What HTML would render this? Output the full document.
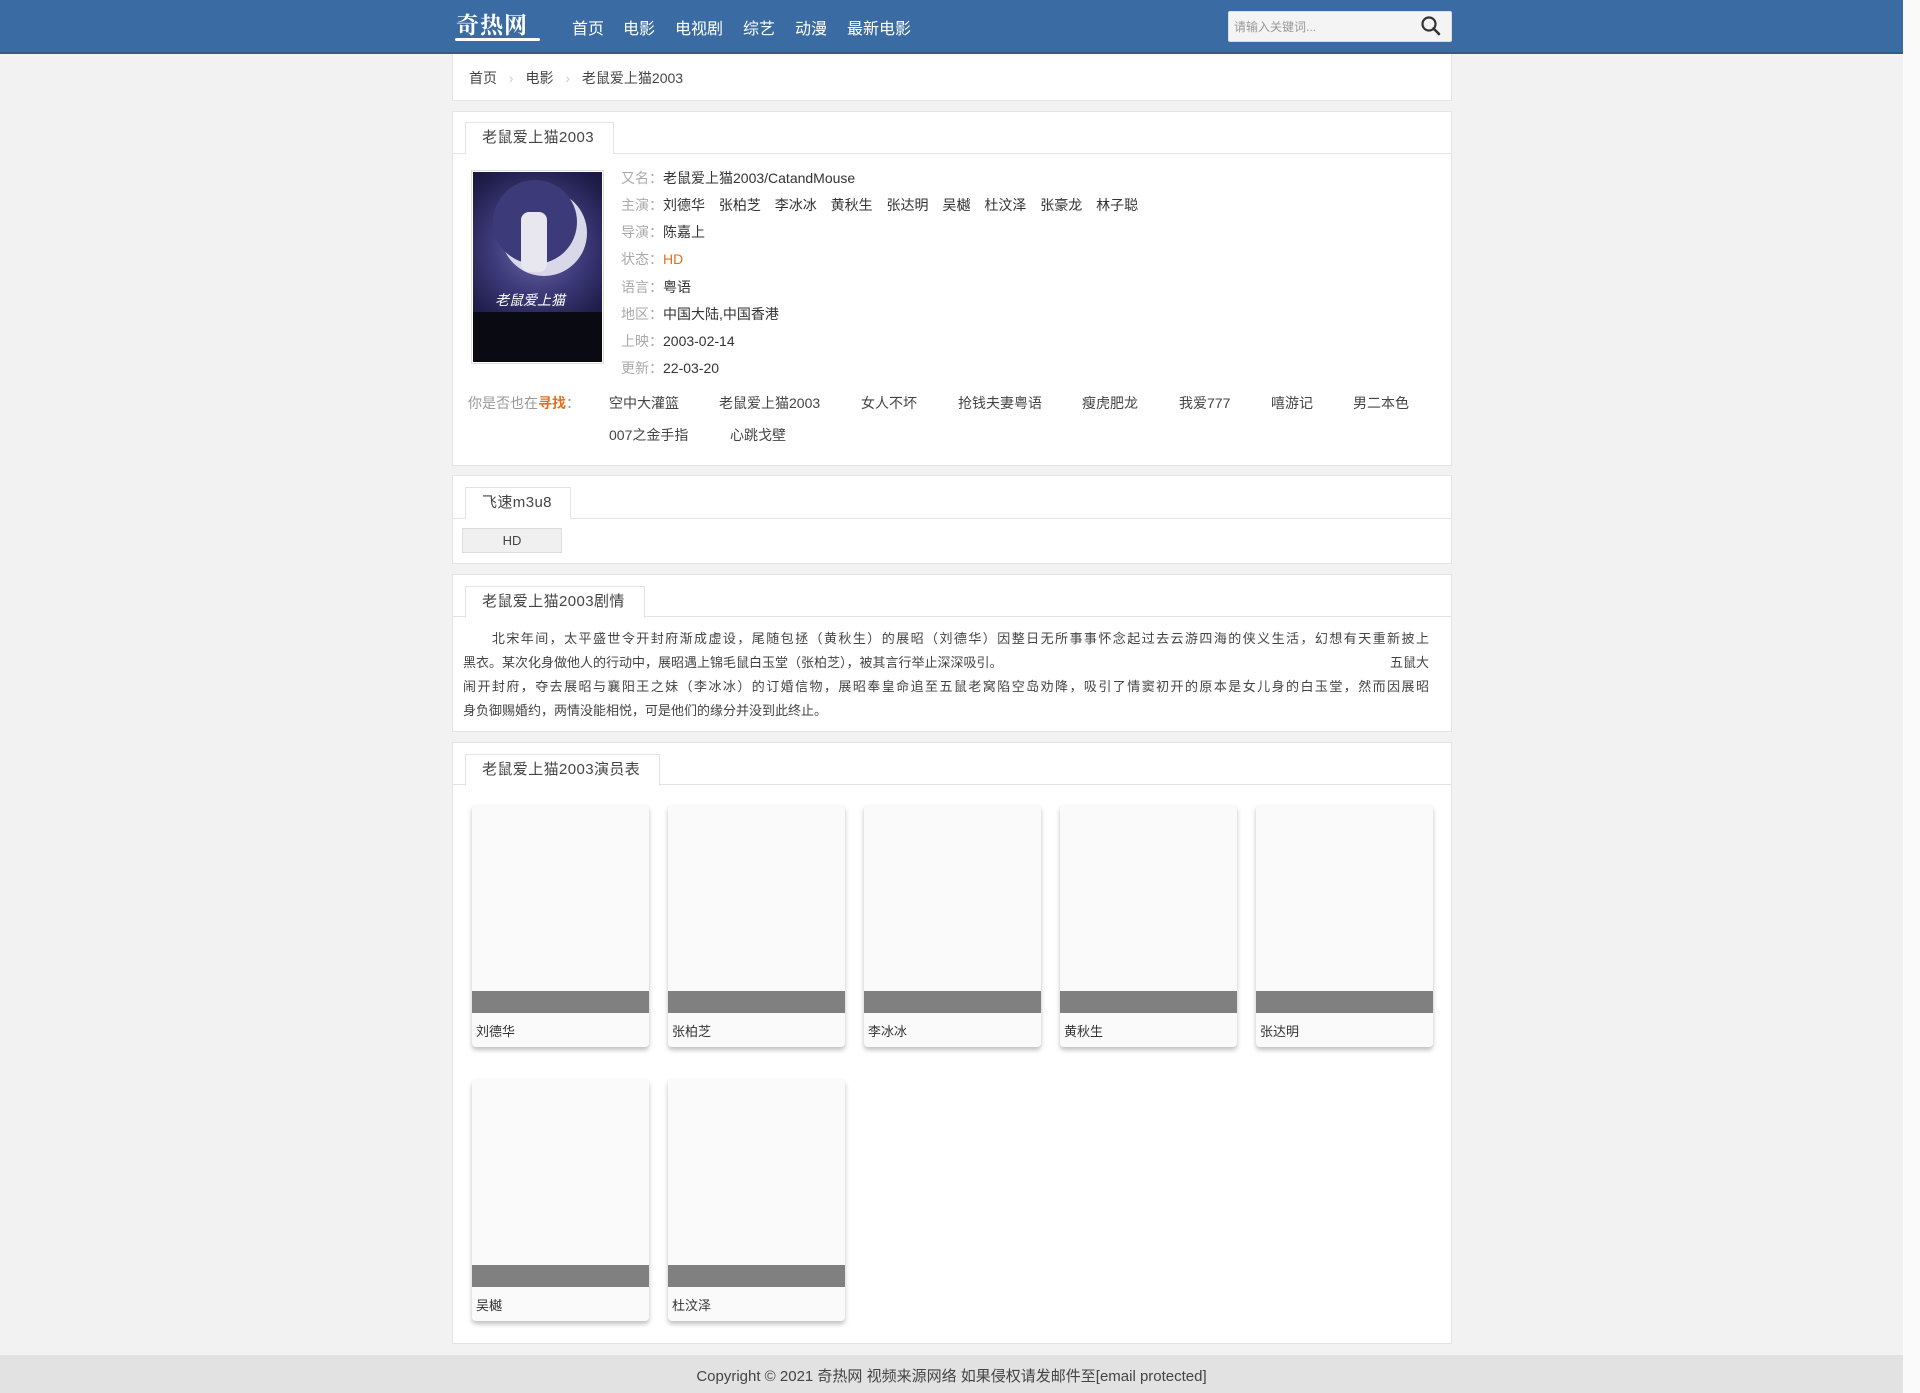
<!DOCTYPE html>
<html><head><meta charset="utf-8">
<style>
*{margin:0;padding:0;box-sizing:border-box}
body{width:1920px;height:1393px;background:#f2f2f2;font-family:"Liberation Sans","Noto Sans CJK SC",sans-serif;color:#333;position:relative;overflow:hidden}
.a{position:absolute}
.sb{position:absolute;left:1903px;top:0;width:17px;height:1393px;background:#fafafa}
.hd{left:0;top:0;width:1903px;height:54px;background:#3a6ca3;border-bottom:2px solid #2f5d90}
.nav a{position:absolute;top:15px;color:#fff;font-size:16px;text-decoration:none;white-space:nowrap}
.box{position:absolute;left:452px;width:1000px;background:#fff;border:1px solid #e3e3e3}
.tabline{position:absolute;left:0;right:0;height:1px;background:#e3e3e3}
.tab{position:absolute;left:12px;background:#fff;border:1px solid #e3e3e3;border-bottom:none;font-size:15px;color:#444;padding:0 17px 0 16px;line-height:30px;height:32px;letter-spacing:.4px}
.info{position:absolute;left:168px;font-size:14px;color:#333;white-space:nowrap}
.info span{color:#aaa}
.rel{position:absolute;font-size:14px;color:#444;white-space:nowrap}
.plot{position:absolute;left:10px;width:966px;font-size:13px;color:#444;text-align:justify;text-align-last:justify;white-space:nowrap}
.card{position:absolute;width:177px;height:242px;background:#fafafa;border-radius:4px;box-shadow:0 3px 5px rgba(0,0,0,.25)}
.card .bar{position:absolute;left:0;right:0;top:186px;height:22px;background:#808080}
.card .n{position:absolute;left:4px;top:216px;font-size:13px;color:#333}
</style></head><body>
<div class="sb"></div>
<div class="a hd"></div>
<div class="a" style="left:456px;top:7px;color:#fff;font-family:'Noto Serif CJK SC',serif;font-size:23px;font-weight:bold;letter-spacing:1px">奇热网</div>
<div class="a" style="left:455px;top:38px;width:85px;height:3px;background:#fff;border-radius:2px"></div>
<div class="nav">
<a style="left:572px">首页</a><a style="left:623px">电影</a><a style="left:675px">电视剧</a><a style="left:743px">综艺</a><a style="left:795px">动漫</a><a style="left:847px">最新电影</a>
</div>
<div class="a" style="left:1228px;top:11px;width:224px;height:31px;background:#f4f4f4;border:1px solid #ddd;border-radius:2px"></div>
<div class="a" style="left:1234px;top:18px;font-size:12px;color:#999">请输入关键词...</div>
<svg class="a" style="left:1420px;top:15px" width="22" height="22" viewBox="0 0 22 22"><circle cx="9" cy="9" r="6.5" fill="none" stroke="#333" stroke-width="2.2"/><line x1="13.5" y1="13.5" x2="19" y2="19" stroke="#333" stroke-width="2.6" stroke-linecap="round"/></svg>

<div class="box" style="top:54px;height:47px;border-top:none">
<div class="a" style="left:16px;top:14px;font-size:14px;color:#444;white-space:nowrap">首页 <span style="color:#ccc;margin:0 8px">›</span> 电影 <span style="color:#ccc;margin:0 8px">›</span> 老鼠爱上猫2003</div>
</div>

<div class="box" style="top:111px;height:355px">
<div class="tabline" style="top:41px"></div>
<div class="tab" style="top:10px;padding-right:19px">老鼠爱上猫2003</div>
<div class="a" style="left:18px;top:58px;width:133px;height:194px;border:1px solid #ddd;padding:1px;background:#fff">
<div style="width:100%;height:100%;background:radial-gradient(circle at 50% 40%,#6b6aa8 0,#3d3a7a 35%,#1f1d4a 65%,#0c0b1c 100%);position:relative;overflow:hidden">
<div style="position:absolute;left:28px;top:18px;width:86px;height:86px;border-radius:50%;background:#d8d8e8"></div>
<div style="position:absolute;left:20px;top:8px;width:84px;height:84px;border-radius:50%;background:#3d3a7a"></div>
<div style="position:absolute;left:48px;top:40px;width:26px;height:60px;background:#e8e6ee;border-radius:8px"></div>
<div style="position:absolute;left:22px;top:118px;color:#fff;font-size:14px;font-style:italic">老鼠爱上猫</div>
<div style="position:absolute;left:0;bottom:0;width:100%;height:50px;background:#0a0a12"></div>
</div></div>
<div class="info" style="top:56px"><span>又名：</span>老鼠爱上猫2003/CatandMouse</div>
<div class="info" style="top:83px;word-spacing:10px"><span style="word-spacing:0">主演：</span>刘德华 张柏芝 李冰冰 黄秋生 张达明 吴樾 杜汶泽 张豪龙 林子聪</div>
<div class="info" style="top:110px"><span>导演：</span>陈嘉上</div>
<div class="info" style="top:137px"><span>状态：</span><b style="font-weight:normal;color:#e07020">HD</b></div>
<div class="info" style="top:165px"><span>语言：</span>粤语</div>
<div class="info" style="top:192px"><span>地区：</span>中国大陆,中国香港</div>
<div class="info" style="top:219px"><span>上映：</span>2003-02-14</div>
<div class="info" style="top:246px"><span>更新：</span>22-03-20</div>
<div class="rel" style="left:15px;top:281px;color:#999">你是否也在<b style="color:#e07020">寻找</b>：</div>
<div class="rel" style="left:156px;top:281px">空中大灌篮</div>
<div class="rel" style="left:266px;top:281px">老鼠爱上猫2003</div>
<div class="rel" style="left:408px;top:281px">女人不坏</div>
<div class="rel" style="left:505px;top:281px">抢钱夫妻粤语</div>
<div class="rel" style="left:629px;top:281px">瘦虎肥龙</div>
<div class="rel" style="left:726px;top:281px">我爱777</div>
<div class="rel" style="left:818px;top:281px">嘻游记</div>
<div class="rel" style="left:900px;top:281px">男二本色</div>
<div class="rel" style="left:156px;top:313px">007之金手指</div>
<div class="rel" style="left:277px;top:313px">心跳戈壁</div>
</div>

<div class="box" style="top:475px;height:89px">
<div class="tabline" style="top:42px"></div>
<div class="tab" style="top:11px;padding-right:18px">飞速m3u8</div>
<div class="a" style="left:9px;top:52px;width:100px;height:25px;background:#f0f0f0;border:1px solid #ddd;font-size:13px;text-align:center;line-height:23px;color:#444">HD</div>
</div>

<div class="box" style="top:574px;height:158px">
<div class="tabline" style="top:41px"></div>
<div class="tab" style="top:11px;padding-right:19px">老鼠爱上猫2003剧情</div>
<div class="plot" style="top:53px">　　北宋年间，太平盛世令开封府渐成虚设，尾随包拯（黄秋生）的展昭（刘德华）因整日无所事事怀念起过去云游四海的侠义生活，幻想有天重新披上</div>
<div class="plot" style="top:77px;text-align-last:auto;width:966px">黑衣。某次化身做他人的行动中，展昭遇上锦毛鼠白玉堂（张柏芝），被其言行举止深深吸引。<span style="position:absolute;right:0">五鼠大</span></div>
<div class="plot" style="top:101px">闹开封府，夺去展昭与襄阳王之妹（李冰冰）的订婚信物，展昭奉皇命追至五鼠老窝陷空岛劝降，吸引了情窦初开的原本是女儿身的白玉堂，然而因展昭</div>
<div class="plot" style="top:125px;text-align-last:auto">身负御赐婚约，两情没能相悦，可是他们的缘分并没到此终止。</div>
</div>

<div class="box" style="top:742px;height:602px">
<div class="tabline" style="top:41px"></div>
<div class="tab" style="top:11px;padding-right:19px">老鼠爱上猫2003演员表</div>
<div class="card" style="left:19px;top:62px"><div class="bar"></div><div class="n">刘德华</div></div>
<div class="card" style="left:215px;top:62px"><div class="bar"></div><div class="n">张柏芝</div></div>
<div class="card" style="left:411px;top:62px"><div class="bar"></div><div class="n">李冰冰</div></div>
<div class="card" style="left:607px;top:62px"><div class="bar"></div><div class="n">黄秋生</div></div>
<div class="card" style="left:803px;top:62px"><div class="bar"></div><div class="n">张达明</div></div>
<div class="card" style="left:19px;top:336px"><div class="bar"></div><div class="n">吴樾</div></div>
<div class="card" style="left:215px;top:336px"><div class="bar"></div><div class="n">杜汶泽</div></div>
</div>

<div class="a" style="left:0;top:1355px;width:1903px;height:38px;background:#e2e2e2"></div>
<div class="a" style="left:0;top:1365px;width:1903px;text-align:center;font-size:15px;color:#444">Copyright © 2021 奇热网 视频来源网络 如果侵权请发邮件至[email protected]</div>
</body></html>
